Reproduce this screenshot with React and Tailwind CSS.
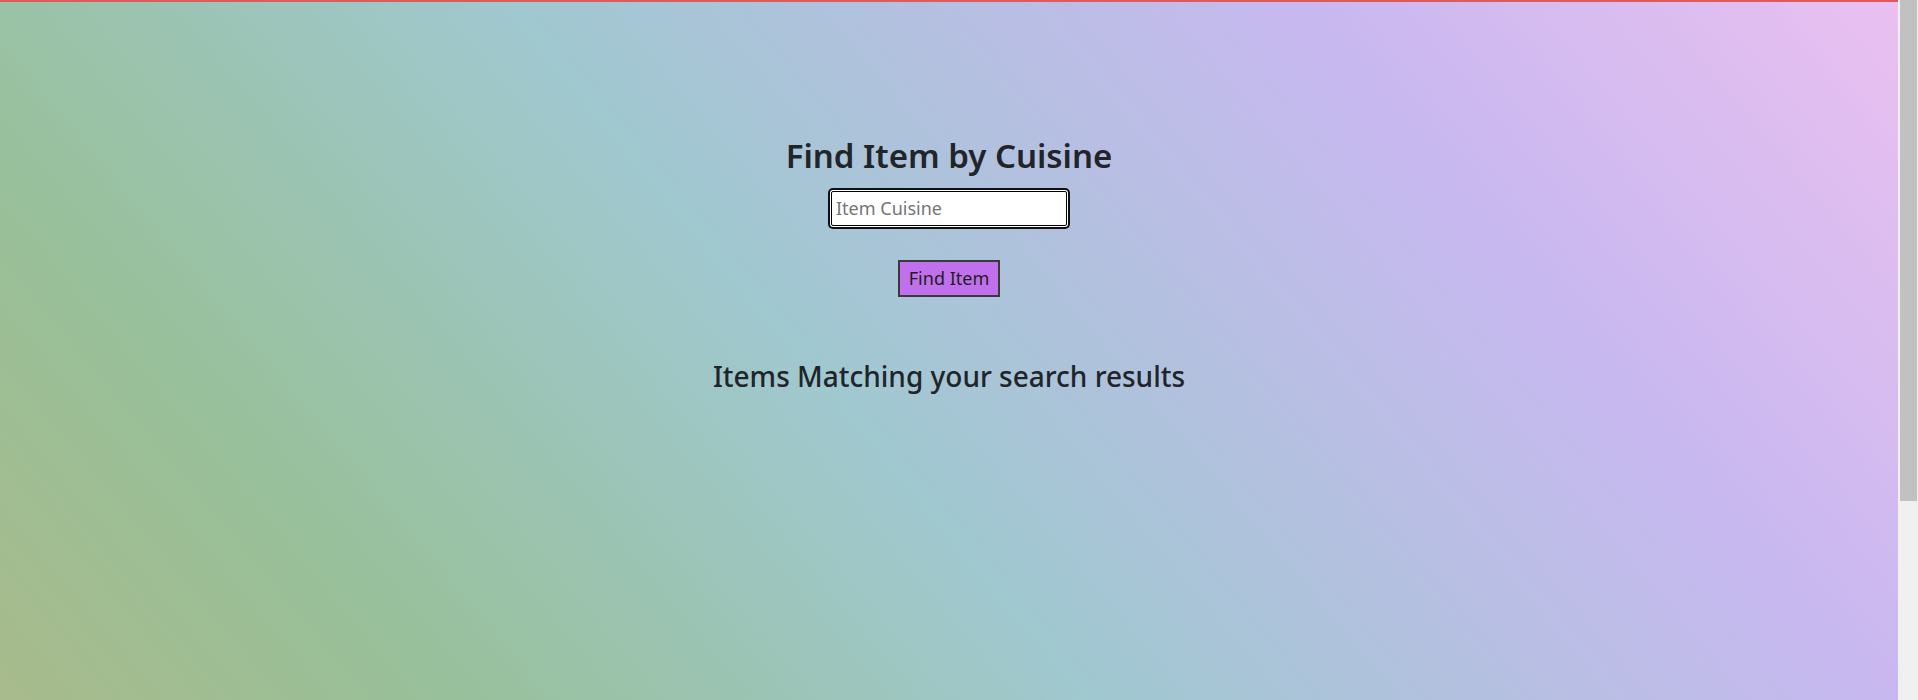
export default function App() {
  return (
    <div
      className="flex h-[700px] overflow-hidden text-[#212529]"
      style={{ fontFamily: '"Noto Sans", "Open Sans", sans-serif' }}
    >
      {/* page */}
      <div className="min-h-[978px] flex-1 bg-[linear-gradient(50deg,#b0b884_0%,#98c09a_25%,#a0c8d0_49%,#c8b8f0_78%,#eac0f0_100%)]">
        <div className="h-[2px] bg-[#e05a5a]" />
        <div className="flex flex-col items-center pt-[134px]">
          <h1 className="text-[33px] leading-[1.2] font-semibold">Find Item by Cuisine</h1>

          <input
            type="text"
            placeholder="Item Cuisine"
            className="mt-[15px] h-[35px] w-[236px] rounded-[2px] border border-black bg-white px-[4px] text-[18px] text-black shadow-[0_0_0_1px_#ffffff,0_0_0_3px_#101010] outline-none placeholder:text-[#757575]"
          />

          <button
            type="button"
            className="mt-[34px] h-[37px] w-[102px] border-2 border-[#3a3a3a] bg-[#c070ec] text-[18px] text-[#1e1e1e]"
          >
            Find Item
          </button>

          <h3 className="mt-[63px] text-[28px] leading-[1.2] font-medium">Items Matching your search results</h3>
        </div>
      </div>

      {/* scrollbar */}
      <div className="w-[20px] shrink-0 bg-[#f0f0f0]">
        <div className="ml-[2px] mr-[1px] h-[501px] bg-[#c1c1c1]" />
      </div>
    </div>
  )
}
